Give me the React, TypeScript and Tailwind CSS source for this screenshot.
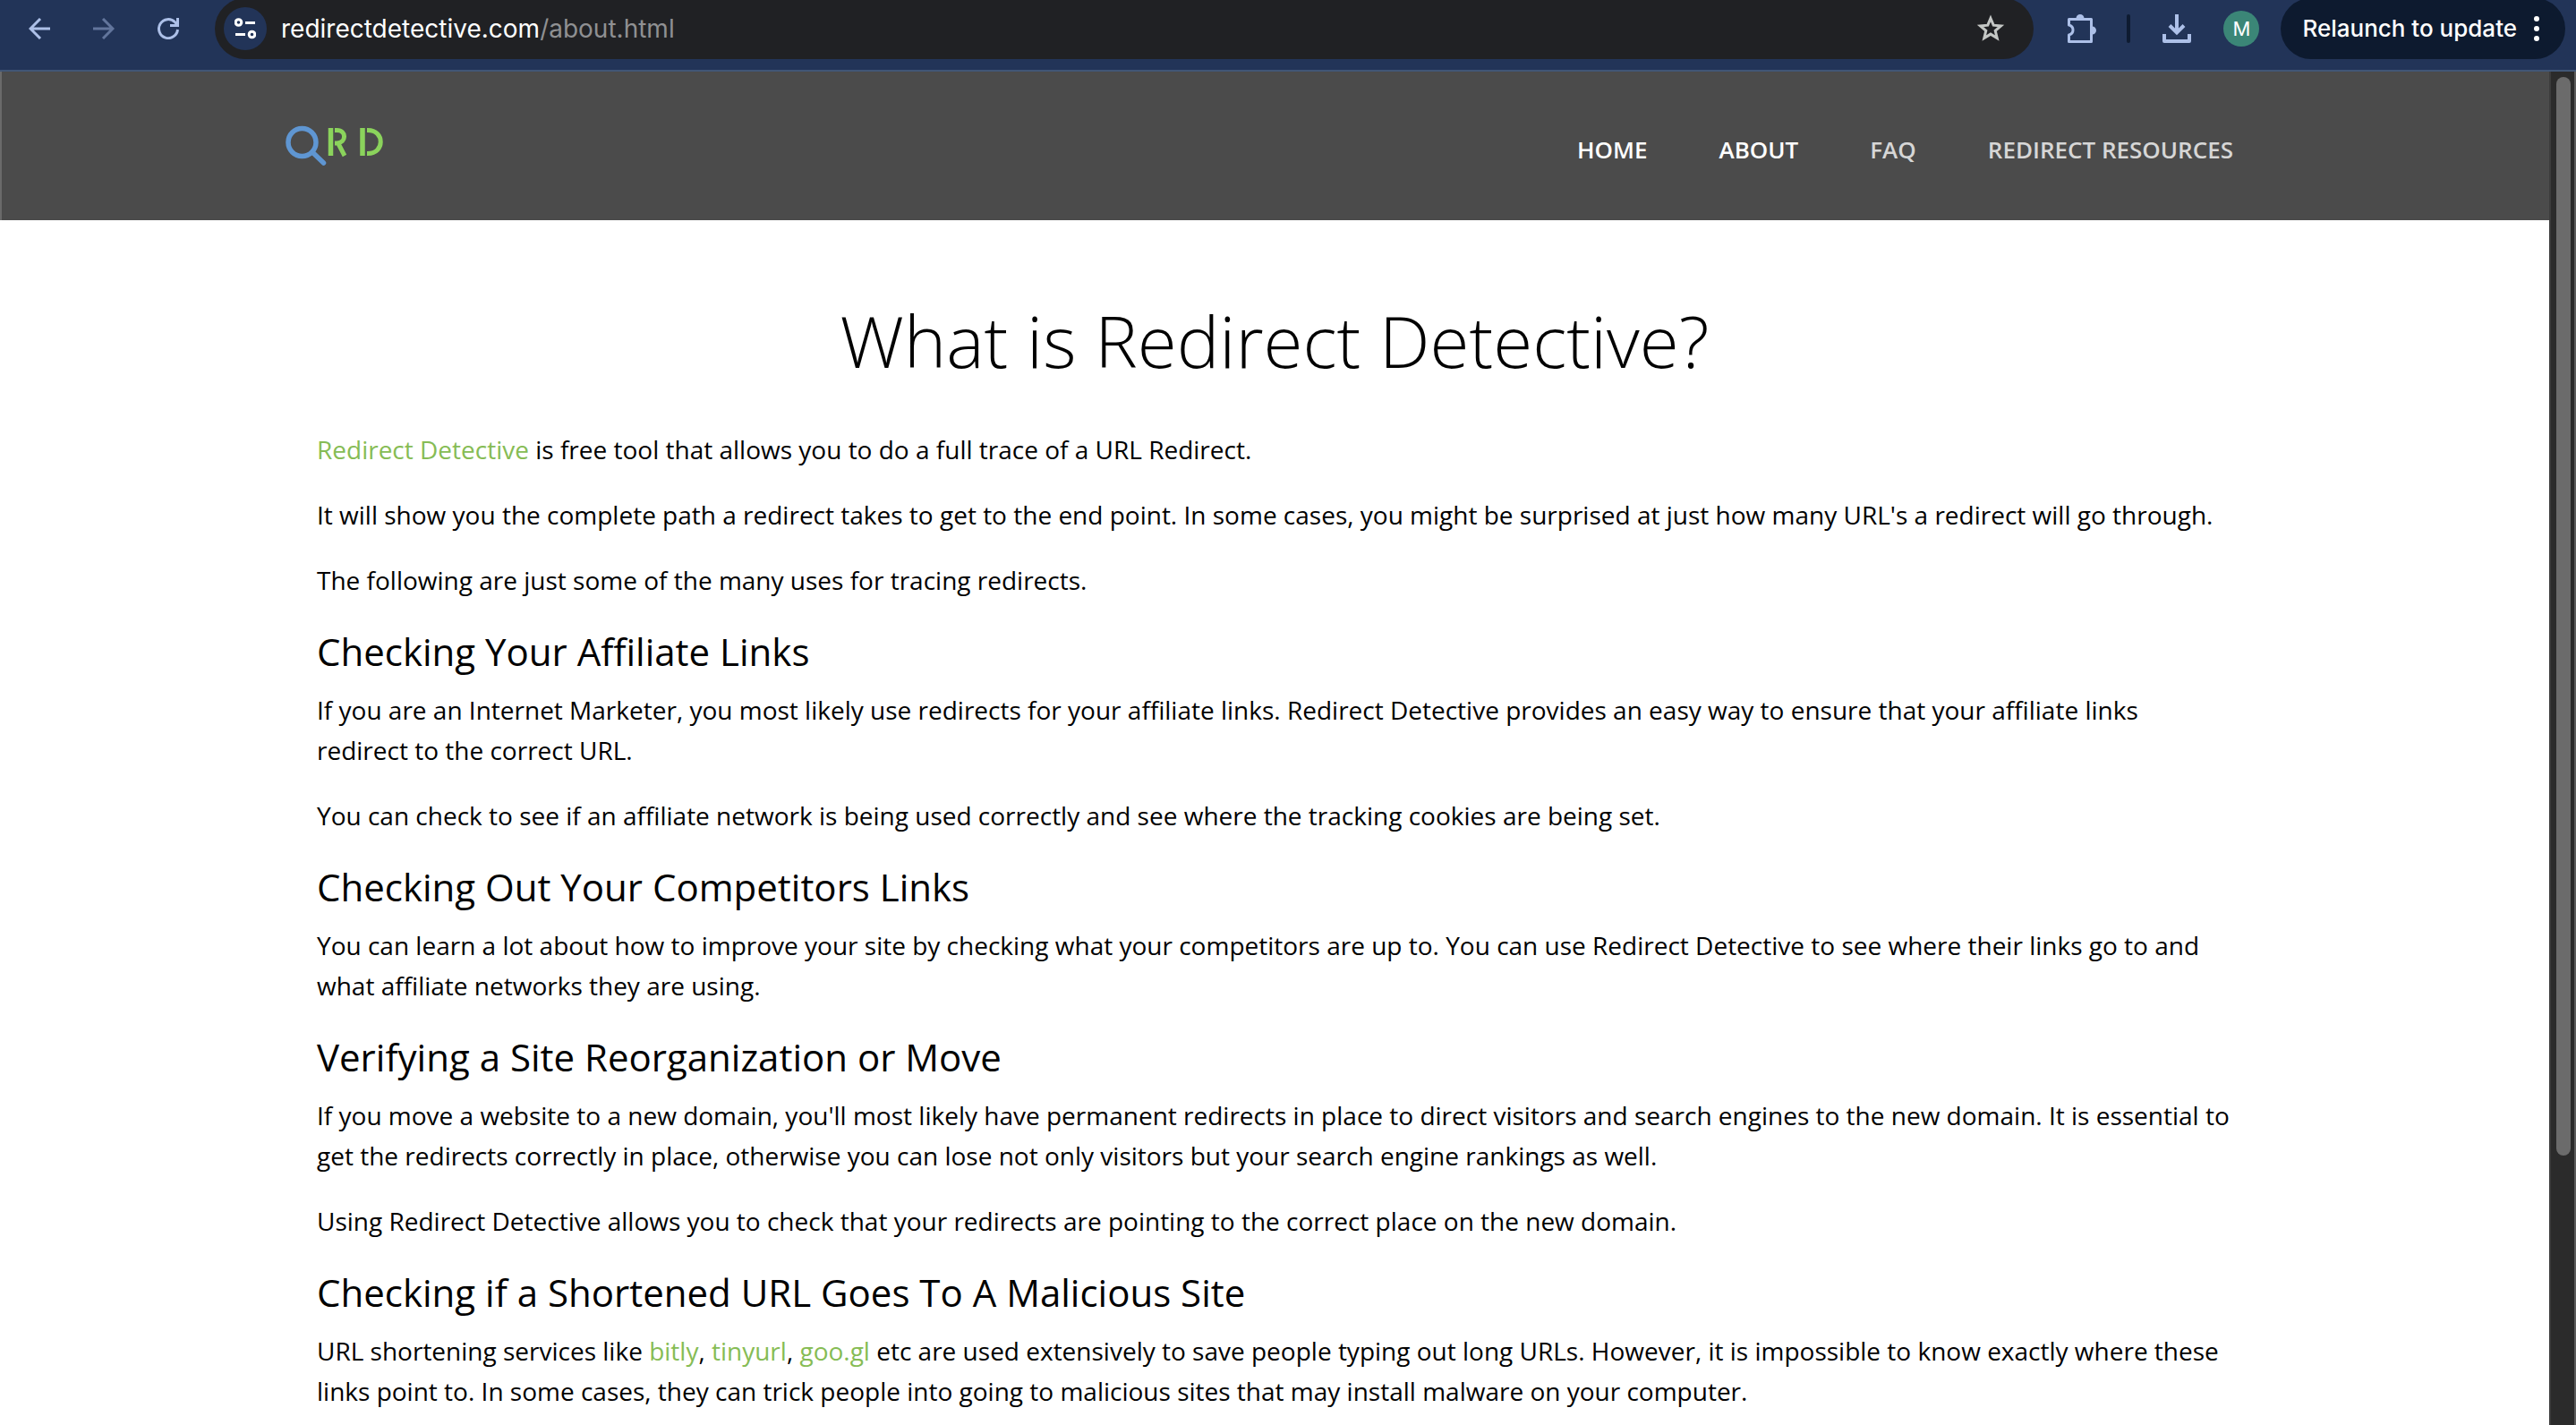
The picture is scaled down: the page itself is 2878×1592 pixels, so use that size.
import type { ReactNode } from "react";

const NAV_ITEMS = [
  { label: "HOME", active: true },
  { label: "ABOUT", active: true },
  { label: "FAQ", active: false },
  { label: "REDIRECT RESOURCES", active: false },
];

function BackIcon() {
  return (
    <svg viewBox="0 0 24 24" className="size-6" fill="none" stroke="currentColor" strokeWidth="3">
      <path d="M24 12H2M13 1 2 12l11 11" />
    </svg>
  );
}

function ForwardIcon() {
  return (
    <svg viewBox="0 0 24 24" className="size-6" fill="none" stroke="currentColor" strokeWidth="3">
      <path d="M0 12h22M11 1l11 11-11 11" />
    </svg>
  );
}

function ReloadIcon() {
  return (
    <svg viewBox="0 0 24 24" className="size-6" fill="none" stroke="currentColor" strokeWidth="3">
      <path d="M22.5 13A10.5 10.5 0 1 1 19.5 4.700l3 4" />
      <path d="M22.5 0v8.500H14" />
    </svg>
  );
}

function TuneIcon() {
  return (
    <svg viewBox="0 0 24 24" className="size-6" fill="none" stroke="currentColor" strokeWidth="3">
      <circle cx="4.500" cy="5" r="3.300" />
      <path d="M12 5.500h11M1 18.500h11" />
      <circle cx="19.500" cy="18.500" r="3.300" />
    </svg>
  );
}

function StarIcon() {
  return (
    <svg viewBox="0 0 32 32" className="size-8" fill="none" stroke="currentColor" strokeWidth="3">
      <path d="m16 4.500 3.200 7.700 8.300.7-6.300 5.400 2 8.200-7.200-4.400-7.200 4.400 2-8.200-6.300-5.400 8.300-.7z" />
    </svg>
  );
}

function PuzzleIcon() {
  return (
    <svg viewBox="0 0 32 32" className="size-8" fill="none" stroke="currentColor" strokeWidth="3">
      <path
        strokeLinejoin="round"
        d="M1.500 5.500h25v25h-25v-7.500c6-1.500 6-9.500 0-11z"
      />
      <path fill="currentColor" stroke="none" d="M9.500 4.500a4.500 4.500 0 0 1 9 0zM27.500 13.500a4.500 4.500 0 0 1 0 9z" />
    </svg>
  );
}

function DownloadIcon() {
  return (
    <svg viewBox="0 0 32 32" className="size-8" fill="none" stroke="currentColor" strokeWidth="4">
      <path d="M16 0v20M8 12.500l8 8 8-8" />
      <path strokeLinejoin="round" d="M2 22v8h28v-8" />
    </svg>
  );
}

function DotsIcon() {
  return (
    <svg viewBox="0 0 8 28" className="h-7 w-2" fill="currentColor">
      <circle cx="4" cy="3" r="3" />
      <circle cx="4" cy="14" r="3" />
      <circle cx="4" cy="25" r="3" />
    </svg>
  );
}

function Logo() {
  return (
    <svg viewBox="0 0 112 48" className="h-12 w-28" fill="none" aria-label="Redirect Detective">
      <circle cx="18.500" cy="19" r="15.500" stroke="#5f96d2" strokeWidth="5.500" />
      <path d="M30 30 42.500 42" stroke="#5f96d2" strokeWidth="5.500" strokeLinecap="round" />
      <g stroke="#8bd35c" strokeWidth="5">
        <path d="M50.500 3v31" strokeWidth="5.500" />
        <path d="M55 5.500h2.500c11 0 10.500 14 0 14.500H55M58.500 19.500 66 34" />
        <path d="M86 3v31" strokeWidth="5.500" />
        <path d="M91 5.500h1c19 0 19 26 0 26h-1" />
      </g>
    </svg>
  );
}

function Toolbar() {
  return (
    <div className="h-20 overflow-hidden border-b-2 border-[#415676] bg-[#223458] font-['Inter',sans-serif] text-[#adc0e8]">
      <div className="flex h-16 items-center pr-3 pl-8">
        <div className="flex items-center gap-12">
          <button aria-label="Back"><BackIcon /></button>
          <button aria-label="Forward" className="text-[#62759c]"><ForwardIcon /></button>
          <button aria-label="Reload"><ReloadIcon /></button>
        </div>
        <div className="ml-10 flex h-[68px] flex-1 items-center rounded-full bg-[#202124] pr-8 pl-2.5">
          <button aria-label="View site information" className="flex size-12 items-center justify-center rounded-full bg-[#223458] text-white">
            <TuneIcon />
          </button>
          <div className="flex-1 pl-4 text-[28px] leading-9 text-[#8f9092]">
            <span className="text-white">redirectdetective.com</span>/about.html
          </div>
          <button aria-label="Bookmark this tab" className="text-[#c4c7c5]"><StarIcon /></button>
        </div>
        <button aria-label="Extensions" className="ml-[38px]"><PuzzleIcon /></button>
        <div className="ml-[34px] h-8 w-1 rounded-full bg-[#0e1b31]" />
        <button aria-label="Downloads" className="ml-9"><DownloadIcon /></button>
        <button aria-label="Profile" className="ml-9 flex size-10 items-center justify-center rounded-full bg-[#3b8677] text-[22px] leading-none text-white">
          M
        </button>
        <button className="ml-6 flex h-[68px] items-center gap-[18px] rounded-full bg-[#0d1a2f] pr-7 pl-6 text-[26px] leading-9 font-medium text-white">
          Relaunch to update
          <DotsIcon />
        </button>
      </div>
    </div>
  );
}

function SiteHeader() {
  return (
    <header className="h-[166px] border-l-2 border-[#6a6a6a] bg-[#4b4b4b]">
      <div className="mx-auto flex h-full max-w-[2212px] items-start justify-between">
        <a href="#home" className="mt-[60px]"><Logo /></a>
        <nav className="mt-[69px] flex gap-20 pr-9 text-[26px] leading-9 font-semibold">
          {NAV_ITEMS.map((item) => (
            <a key={item.label} href="#nav" className={item.active ? "text-white" : "text-[#d6d6d6]"}>
              {item.label}
            </a>
          ))}
        </nav>
      </div>
    </header>
  );
}

function GreenLink({ children }: { children: ReactNode }) {
  return <a href="#link" className="text-[#86bc55]">{children}</a>;
}

function Section({ title, children }: { title: string; children: ReactNode }) {
  return (
    <section className="mt-[34px]">
      <h2 className="mb-5 text-[42px] leading-[46px]">{title}</h2>
      <div className="flex flex-col gap-7">{children}</div>
    </section>
  );
}

export default function App() {
  return (
    <div className="flex h-screen flex-col overflow-hidden bg-white font-['Open_Sans',sans-serif] text-black">
      <Toolbar />
      <div className="flex min-h-0 flex-1">
        <div className="min-w-0 flex-1 overflow-hidden">
          <SiteHeader />
          <main className="mx-auto max-w-[2140px] pt-[90px] text-[28px] leading-[45px]">
            <h1 className="mb-14 text-center text-[80px] leading-[88px] font-light">What is Redirect Detective?</h1>
            <div className="flex flex-col gap-7">
              <p><GreenLink>Redirect Detective</GreenLink> is free tool that allows you to do a full trace of a URL Redirect.</p>
              <p>It will show you the complete path a redirect takes to get to the end point. In some cases, you might be surprised at just how many URL's a redirect will go through.</p>
              <p>The following are just some of the many uses for tracing redirects.</p>
            </div>
            <Section title="Checking Your Affiliate Links">
              <p>If you are an Internet Marketer, you most likely use redirects for your affiliate links. Redirect Detective provides an easy way to ensure that your affiliate links redirect to the correct URL.</p>
              <p>You can check to see if an affiliate network is being used correctly and see where the tracking cookies are being set.</p>
            </Section>
            <Section title="Checking Out Your Competitors Links">
              <p>You can learn a lot about how to improve your site by checking what your competitors are up to. You can use Redirect Detective to see where their links go to and what affiliate networks they are using.</p>
            </Section>
            <Section title="Verifying a Site Reorganization or Move">
              <p>If you move a website to a new domain, you'll most likely have permanent redirects in place to direct visitors and search engines to the new domain. It is essential to get the redirects correctly in place, otherwise you can lose not only visitors but your search engine rankings as well.</p>
              <p>Using Redirect Detective allows you to check that your redirects are pointing to the correct place on the new domain.</p>
            </Section>
            <Section title="Checking if a Shortened URL Goes To A Malicious Site">
              <p>URL shortening services like <GreenLink>bitly</GreenLink>, <GreenLink>tinyurl</GreenLink>, <GreenLink>goo.gl</GreenLink> etc are used extensively to save people typing out long URLs. However, it is impossible to know exactly where these links point to. In some cases, they can trick people into going to malicious sites that may install malware on your computer.</p>
            </Section>
          </main>
        </div>
        <div className="w-[30px] border-r-2 border-l-2 border-r-[#5c5c5c] border-l-[#3c3c3c] bg-[#2b2b2b] px-1 pt-1.5 pl-1.5">
          <div className="h-[80%] w-4 rounded-full bg-[#6b6b6b]" />
        </div>
      </div>
    </div>
  );
}
